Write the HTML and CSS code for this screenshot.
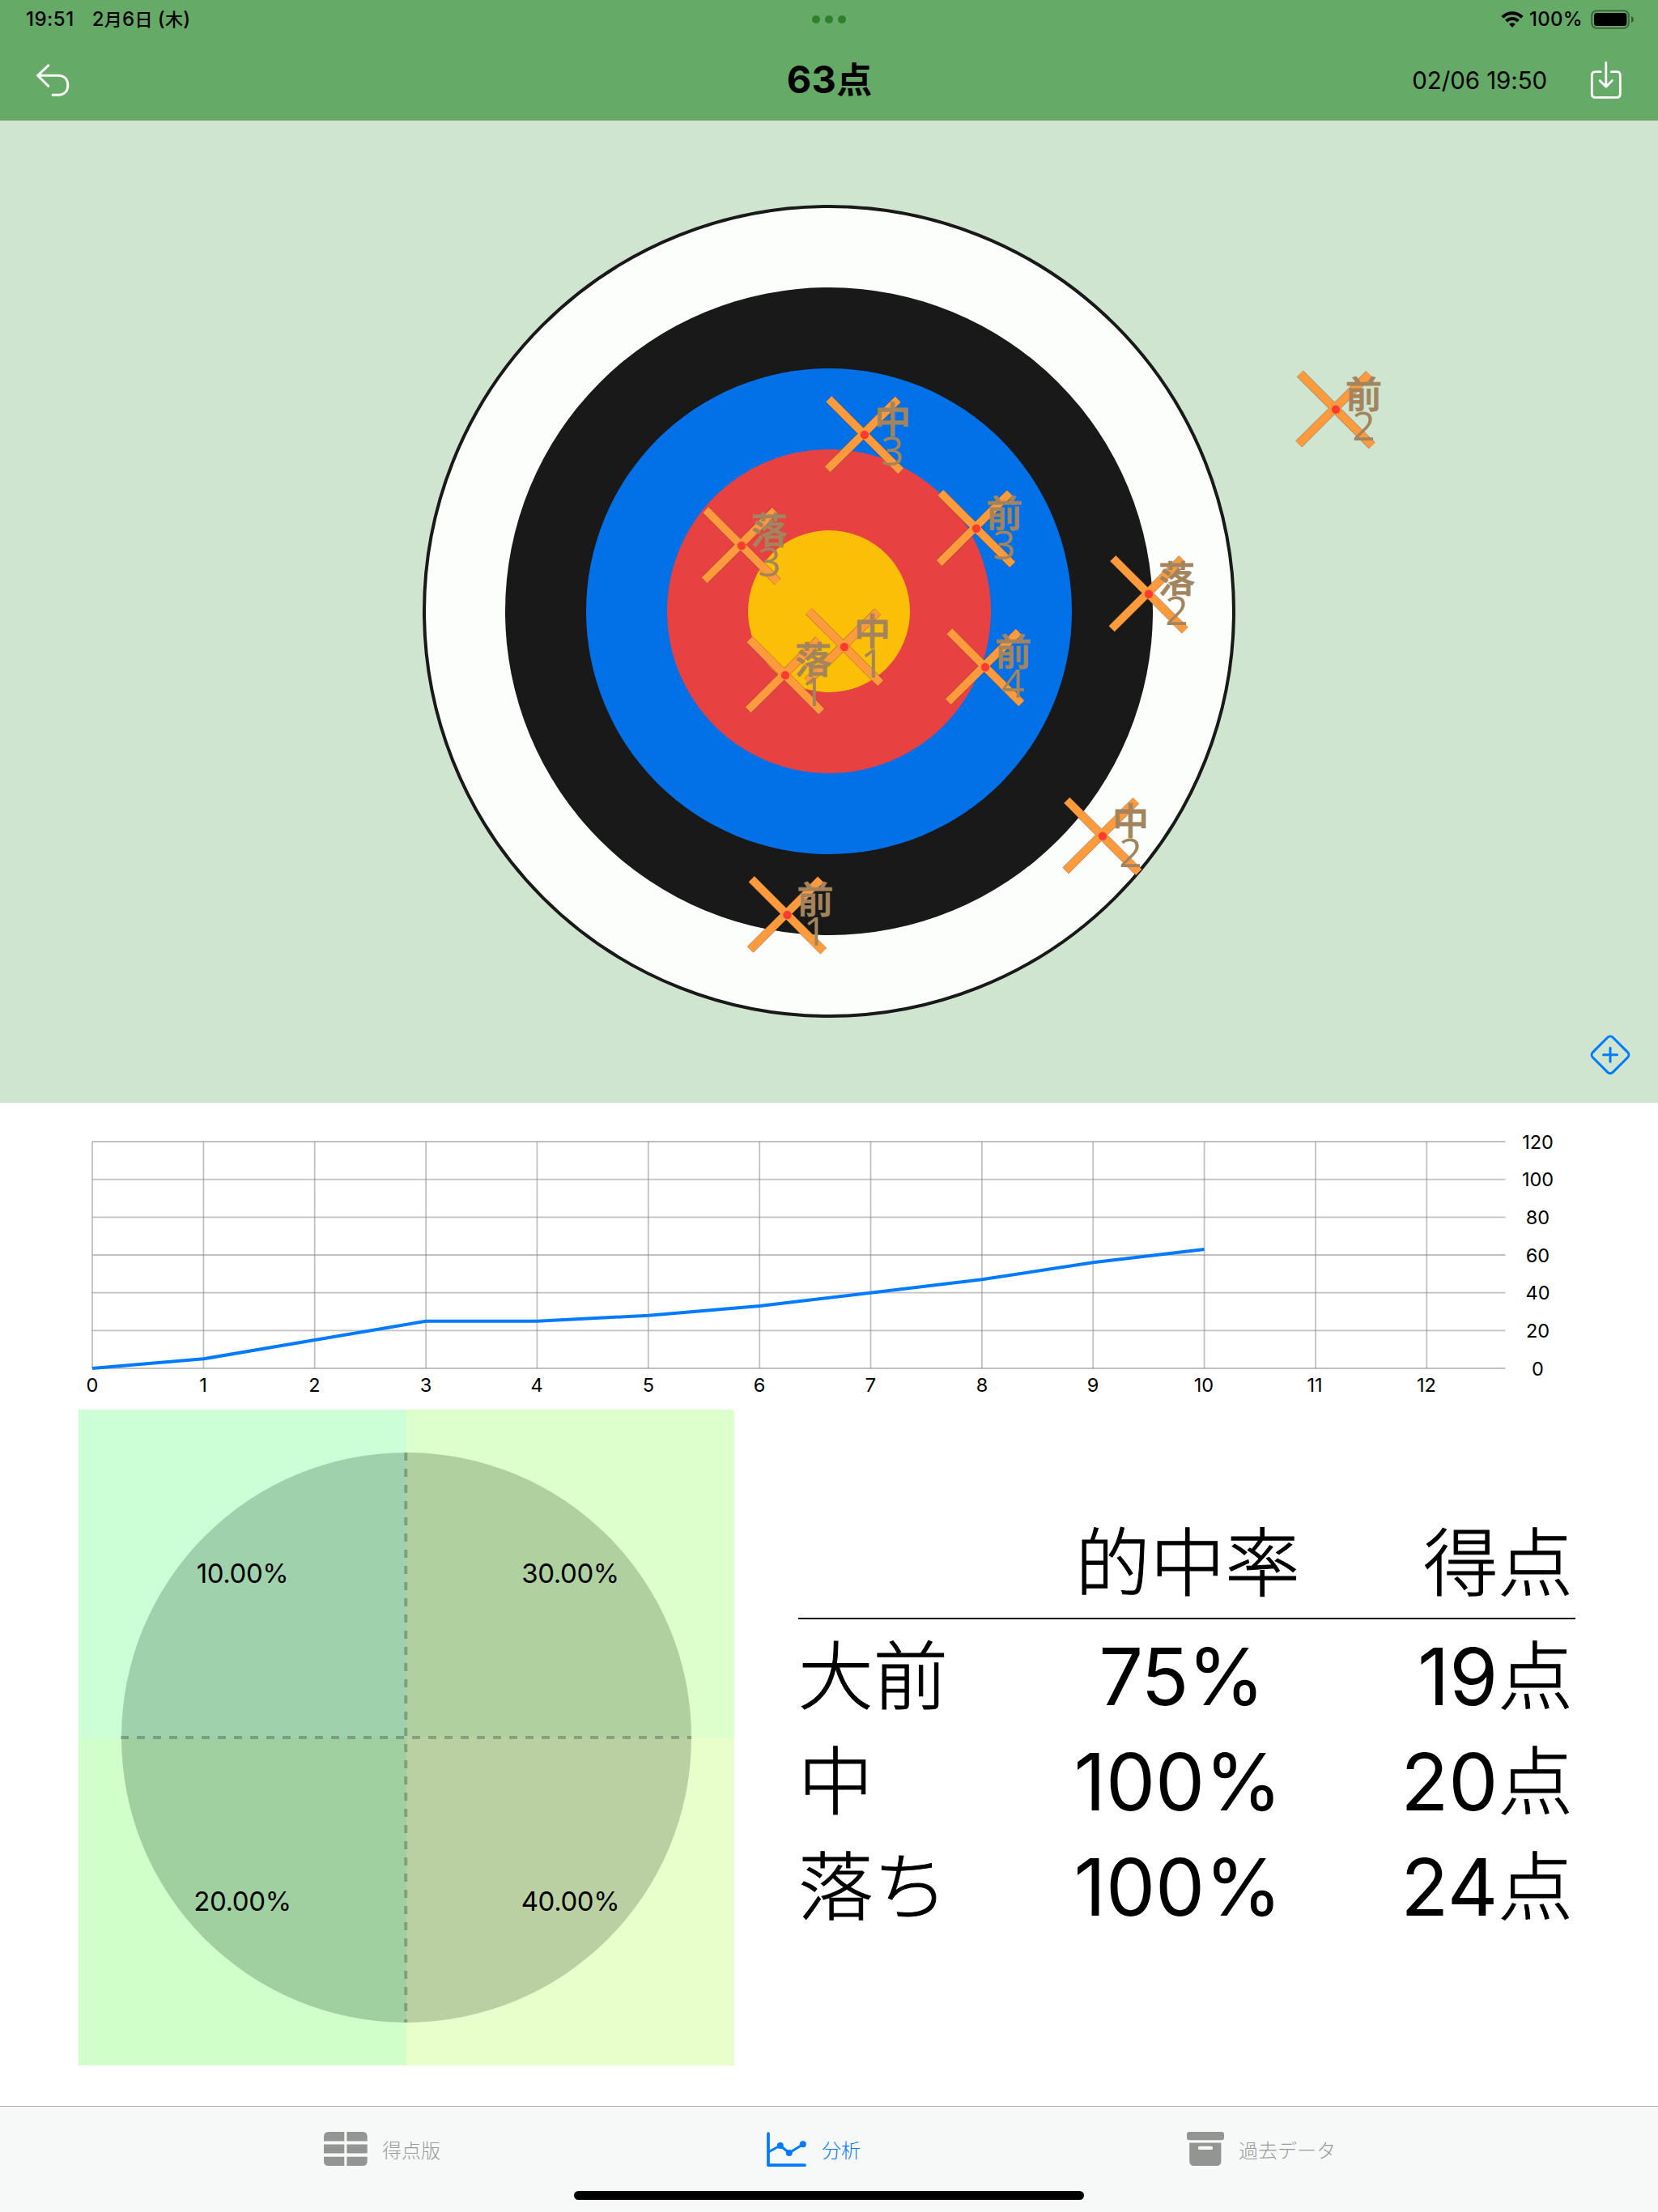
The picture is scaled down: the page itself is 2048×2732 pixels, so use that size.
FILE: index.html
```html
<!DOCTYPE html>
<html lang="ja">
<head>
<meta charset="utf-8">
<title>63点</title>
<link rel="stylesheet" href="styles.css">
</head>
<body>
<div class="app">
  <header class="header">
    <div class="status">
      <div class="status-left"><span class="status-time">19:51</span><span class="status-date">2<b>月</b>6<b>日</b><i>(</i><b>木</b>)</span></div>
      <div class="status-dots"><span></span><span></span><span></span></div>
      <div class="status-right">
        <svg class="wifi" width="28" height="20" viewBox="0 0 28 20" fill="none" stroke="#000" stroke-width="4">
          <path d="M1.8 7.4a17.3 17.3 0 0 1 24.4 0"/>
          <path d="M6.6 12.1a10.5 10.5 0 0 1 14.8 0"/>
          <path d="M14 20l-4-4.2a5.8 5.8 0 0 1 8 0z" fill="#000" stroke="none"/>
        </svg>
        <span class="status-percent">100%</span>
        <svg class="battery" width="54" height="24" viewBox="0 0 54 24">
          <rect x="1.2" y="1.2" width="45.6" height="21.6" rx="6" fill="none" stroke="#000" stroke-opacity=".4" stroke-width="2"/>
          <rect x="4" y="4" width="40.4" height="16" rx="3.5"/>
          <path d="M50 8c4 1.4 4 6.8 0 8.2z" fill-opacity=".45"/>
        </svg>
      </div>
    </div>
    <div class="navbar">
      <div class="nav-side">
        <svg class="undo" width="44" height="42" viewBox="0 0 44 42" fill="none" stroke="#fff" stroke-width="3" stroke-linecap="round" stroke-linejoin="round">
          <path d="M16.700 2.800L3.500 15.300L16.700 28.300M3.500 15.300H28.500C37 15.300 40.800 20.500 40.800 27.300C40.800 34 37 39.200 28.500 39.200H22"/>
        </svg>
      </div>
      <h1 class="title">63<span>点</span></h1>
      <div class="nav-side nav-right">
        <span class="nav-date">02/06 19:50</span>
        <svg class="save" width="40" height="48" viewBox="0 0 40 48" fill="none" stroke="#fff" stroke-width="2.800" stroke-linecap="round" stroke-linejoin="round">
          <path d="M13.200 13.700H6.700Q2.300 13.700 2.300 18.100V40.900Q2.300 45.300 6.700 45.300H32.900Q37.300 45.300 37.300 40.900V18.100Q37.300 13.700 32.900 13.700H26.400M19.800 2.400V32.200M12.200 24.600L19.800 32.200L27.400 24.600"/>
        </svg>
      </div>
    </div>
  </header>

  <main>
    <section class="board">
      <svg width="2048" height="1213" viewBox="0 149 2048 1213">
        <defs>
          <g id="hit">
            <path class="hit-edge" d="M-44.200-44.200L44.700 44.700M41.200-43.800L-45.800 42.800"/>
            <path class="hit-arm" d="M-44.200-44.200L44.700 44.700M41.200-43.800L-45.800 42.800"/>
            <circle r="5.200" fill="#ff3b30"/>
          </g>
        </defs>
        <circle cx="1024" cy="755" r="500" fill="#fbfefb" stroke="#191919" stroke-width="4"/>
        <circle cx="1024" cy="755" r="400" fill="#191919"/>
        <circle cx="1024" cy="755" r="300" fill="#0271e8"/>
        <circle cx="1024" cy="755" r="200" fill="#e74142"/>
        <circle cx="1024" cy="755" r="100" fill="#fcbf07"/>
        <g class="marks">
          <g transform="translate(972.500 1130)"><use href="#hit"/><text class="who" x="34.500" y="-2">前</text><text class="shot" x="34.500" y="38">1</text></g>
          <g transform="translate(1043 799)"><use href="#hit"/><text class="who" x="34.500" y="-2">中</text><text class="shot" x="34.500" y="38">1</text></g>
          <g transform="translate(970 834)"><use href="#hit"/><text class="who" x="34.500" y="-2">落</text><text class="shot" x="34.500" y="38">1</text></g>
          <g transform="translate(1650 505.700)"><use href="#hit"/><text class="who" x="34.500" y="-2">前</text><text class="shot" x="34.500" y="38">2</text></g>
          <g transform="translate(1362 1032.600)"><use href="#hit"/><text class="who" x="34.500" y="-2">中</text><text class="shot" x="34.500" y="38">2</text></g>
          <g transform="translate(1419 733.800)"><use href="#hit"/><text class="who" x="34.500" y="-2">落</text><text class="shot" x="34.500" y="38">2</text></g>
          <g transform="translate(1206 652.700)"><use href="#hit"/><text class="who" x="34.500" y="-2">前</text><text class="shot" x="34.500" y="38">3</text></g>
          <g transform="translate(1068 537)"><use href="#hit"/><text class="who" x="34.500" y="-2">中</text><text class="shot" x="34.500" y="38">3</text></g>
          <g transform="translate(916 674)"><use href="#hit"/><text class="who" x="34.500" y="-2">落</text><text class="shot" x="34.500" y="38">3</text></g>
          <g transform="translate(1217 824)"><use href="#hit"/><text class="who" x="34.500" y="-2">前</text><text class="shot" x="34.500" y="38">4</text></g>
        </g>
        <g transform="translate(1989 1302.800)" fill="none" stroke="#007aff" stroke-width="3" stroke-linecap="round">
          <rect x="-17.500" y="-17.500" width="35" height="35" rx="4.500" transform="rotate(45)"/>
          <path d="M-8.500 0H8.500M0-8.500V8.500"/>
        </g>
      </svg>
    </section>

    <section class="chart">
      <svg width="2048" height="379" viewBox="0 1362 2048 379">
        <path class="grid-line" d="M114 1410H1859.500M114 1456.670H1859.500M114 1503.330H1859.500M114 1550H1859.500M114 1596.670H1859.500M114 1643.330H1859.500M114 1690H1859.500"/>
        <path class="grid-line" d="M114 1410V1690M251.400 1410V1690M388.700 1410V1690M526.100 1410V1690M663.400 1410V1690M800.800 1410V1690M938.200 1410V1690M1075.500 1410V1690M1212.900 1410V1690M1350.200 1410V1690M1487.600 1410V1690M1625 1410V1690M1762.300 1410V1690"/>
        <polyline class="score-line" points="114,1690 251.400,1678.330 388.700,1655 526.100,1631.670 663.400,1631.670 800.800,1624.670 938.200,1613 1075.500,1596.670 1212.900,1580.330 1350.200,1559.330 1487.600,1543"/>
        <g class="axis">
          <text x="114" y="1719">0</text><text x="251" y="1719">1</text><text x="388.500" y="1719">2</text><text x="526" y="1719">3</text><text x="663" y="1719">4</text><text x="801" y="1719">5</text><text x="938" y="1719">6</text><text x="1075.500" y="1719">7</text><text x="1213" y="1719">8</text><text x="1350" y="1719">9</text><text x="1487" y="1719">10</text><text x="1624" y="1719">11</text><text x="1762" y="1719">12</text>
          <text x="1899.500" y="1419">120</text><text x="1899.500" y="1465">100</text><text x="1899.500" y="1512">80</text><text x="1899.500" y="1559">60</text><text x="1899.500" y="1605">40</text><text x="1899.500" y="1652">20</text><text x="1899.500" y="1699">0</text>
        </g>
      </svg>
    </section>

    <section class="summary">
      <svg class="quadrants" width="810" height="810" viewBox="97 1741 810 810">
        <rect x="97" y="1741" width="405" height="405" fill="#ccffd5"/>
        <rect x="502" y="1741" width="405" height="405" fill="#dcffcb"/>
        <rect x="97" y="2146" width="405" height="405" fill="#d0ffca"/>
        <rect x="502" y="2146" width="405" height="405" fill="#e8ffcb"/>
        <path d="M502 2146V1794A352 352 0 0 0 150 2146z" fill="#9fd1ac"/>
        <path d="M502 2146V1794A352 352 0 0 1 854 2146z" fill="#b0d0a0"/>
        <path d="M502 2146V2498A352 352 0 0 1 150 2146z" fill="#a1d0a0"/>
        <path d="M502 2146V2498A352 352 0 0 0 854 2146z" fill="#bbd0a2"/>
        <path d="M149 2146H854M501.300 1794V2498" stroke="#000" stroke-opacity=".23" stroke-width="4" stroke-dasharray="10"/>
        <g class="share">
          <text x="299.500" y="1955">10.00%</text><text x="704.500" y="1955">30.00%</text>
          <text x="299.500" y="2360">20.00%</text><text x="704.500" y="2360">40.00%</text>
        </g>
      </svg>
      <div class="table">
        <div class="row row-head"><span></span><span class="rate"><b>的中率</b></span><span class="points"><b>得点</b></span></div>
        <div class="row"><span><b>大前</b></span><span class="rate rate-short">75%</span><span class="points">19<b>点</b></span></div>
        <div class="row"><span><b>中</b></span><span class="rate">100%</span><span class="points">20<b>点</b></span></div>
        <div class="row"><span><b>落ち</b></span><span class="rate">100%</span><span class="points">24<b>点</b></span></div>
      </div>
    </section>
  </main>

  <nav class="tabs">
    <div class="tab-list">
      <a class="tab tab-board">
        <svg width="54" height="42" viewBox="0 0 54 42" fill="#929591">
          <path d="M25.300 0V11.400H0V6Q0 0 6 0zM28.400 0H47.700Q53.700 0 53.700 6V11.400H28.400zM0 15.400H25.300V26.400H0zM28.400 15.400H53.700V26.400H28.400zM0 30.700H25.300V42H6Q0 42 0 36zM28.400 30.700H53.700V36Q53.700 42 47.700 42H28.400z"/>
        </svg>
        <span>得点版</span>
      </a>
      <a class="tab tab-analysis">
        <svg width="50" height="44" viewBox="0 0 50 44" fill="none" stroke="#007aff" stroke-linecap="round" stroke-linejoin="round">
          <path d="M2 2.200V41.200H47" stroke-width="3.700"/>
          <path d="M3 24.500L16.800 17L27.800 26L44.800 15.500" stroke-width="3"/>
          <g fill="#007aff" stroke="none"><circle cx="16.800" cy="17" r="4"/><circle cx="27.800" cy="26" r="4"/><circle cx="44.800" cy="15.300" r="4"/></g>
        </svg>
        <span>分析</span>
      </a>
      <a class="tab tab-history">
        <svg width="46" height="42" viewBox="0 0 46 42" fill="#929591">
          <rect width="46" height="10.300" rx="3"/>
          <path fill-rule="evenodd" d="M3.200 13.600H42.400V36Q42.400 42 36.400 42H9.200Q3.200 42 3.200 36zM16 17.700a2.200 2.200 0 0 0 0 4.400h14a2.200 2.200 0 0 0 0-4.400z"/>
        </svg>
        <span>過去データ</span>
      </a>
    </div>
    <div class="home-bar"></div>
  </nav>
</div>
</body>
</html>
```
FILE: styles.css
```css
* { box-sizing: border-box; }
body { margin: 0; background: #fff; color: #000; font-family: Inter, "Noto Sans CJK JP", sans-serif; }
svg { display: block; flex: none; }
b, i { font-weight: inherit; font-style: normal; }
.app { width: 2048px; height: 2732px; display: flex; flex-direction: column; overflow: hidden; }

.header { height: 149px; background: #65aa66; border-bottom: 1px solid #8d9a8d; display: flex; flex-direction: column; }
.status { height: 48px; display: grid; grid-template-columns: 1fr auto 1fr; align-items: center; padding: 0 29px 0 32px; font-size: 24px; font-weight: 500; line-height: 48px; }
.status-left { display: flex; gap: 22px; white-space: nowrap; }
.status-time { letter-spacing: 0.5px; }
.status-date { letter-spacing: 0.3px; }
.status-date b { font-size: 22px; }
.status-date i { margin-left: 6px; }
.status-dots { display: flex; gap: 6px; margin-right: 3px; }
.status-dots span { width: 10px; height: 10px; border-radius: 50%; background: #2f7f2f; }
.status-right { display: flex; align-items: center; justify-content: flex-end; }
.status-percent { margin: 0 10px 0 7px; letter-spacing: 0.3px; }

.navbar { height: 100px; display: grid; grid-template-columns: 1fr auto 1fr; align-items: center; padding: 0 44px 0 43px; }
.title { margin: 0 0 0 2px; font-size: 47px; font-weight: 700; line-height: 100px; letter-spacing: 0.3px; }
.title span { font-size: 44px; letter-spacing: 0; }
.nav-side { display: flex; align-items: center; }
.nav-right { justify-content: flex-end; gap: 53px; }
.nav-date { font-size: 29.5px; letter-spacing: -0.1px; }

.board { height: 1213px; background: #cfe5d0; }
.hit-edge { fill: none; stroke: #6b4a2a; stroke-opacity: .6; stroke-width: 11; }
.hit-arm { fill: none; stroke: #ff9a3d; stroke-width: 9.800; }
.marks text { fill: #a4845d; text-anchor: middle; }
.marks .who { font-family: "Noto Sans CJK JP", sans-serif; font-size: 45px; font-weight: 500; stroke: #a4845d; stroke-width: 0.900px; }
.marks .shot { font-family: "Open Sans", sans-serif; font-size: 50px; font-weight: 400; }

.chart { height: 379px; }
.grid-line { fill: none; stroke: #8e8e93; stroke-opacity: .55; stroke-width: 1.800; }
.score-line { fill: none; stroke: #007aff; stroke-width: 4; }
.axis { font-size: 23.500px; text-anchor: middle; }

.summary { height: 860px; display: flex; padding-left: 97px; }
.share { font-size: 33px; text-anchor: middle; letter-spacing: -0.4px; }
.table { width: 960px; margin: 125px 0 0 79px; font-size: 97px; }
.row { height: 130px; line-height: 130px; display: grid; grid-template-columns: 303px 332px 1fr; white-space: nowrap; padding: 0 3px 0 0; }
.row b { font-size: 92.500px; line-height: 0; vertical-align: 2px; font-weight: 300; -webkit-text-stroke: 1px #000; font-family: "Noto Sans CJK JP", sans-serif; }
.row-head { height: 134px; border-bottom: 2px solid #000; margin-bottom: 6px; }
.rate { text-align: center; }
.rate-short { padding-left: 8px; letter-spacing: -1.500px; }
.row-head .rate { padding-left: 24px; }
.points { text-align: right; }

.tabs { height: 131px; background: #f7f8f8; border-top: 1px solid #b2b2b2; display: flex; flex-direction: column; }
.tab-list { height: 104px; display: flex; padding-left: 400px; }
.tab { display: flex; align-items: flex-start; padding-top: 31px; gap: 18px; color: #999b99; font-size: 24px; line-height: 43px; }
.tab span { font-family: "Noto Sans CJK JP", sans-serif; font-weight: 300; }
.tab-board { width: 547px; }
.tab-analysis { width: 519px; color: #007aff; }
.home-bar { width: 630px; height: 11px; margin: 0 auto; border-radius: 6px; background: #000; }
```
